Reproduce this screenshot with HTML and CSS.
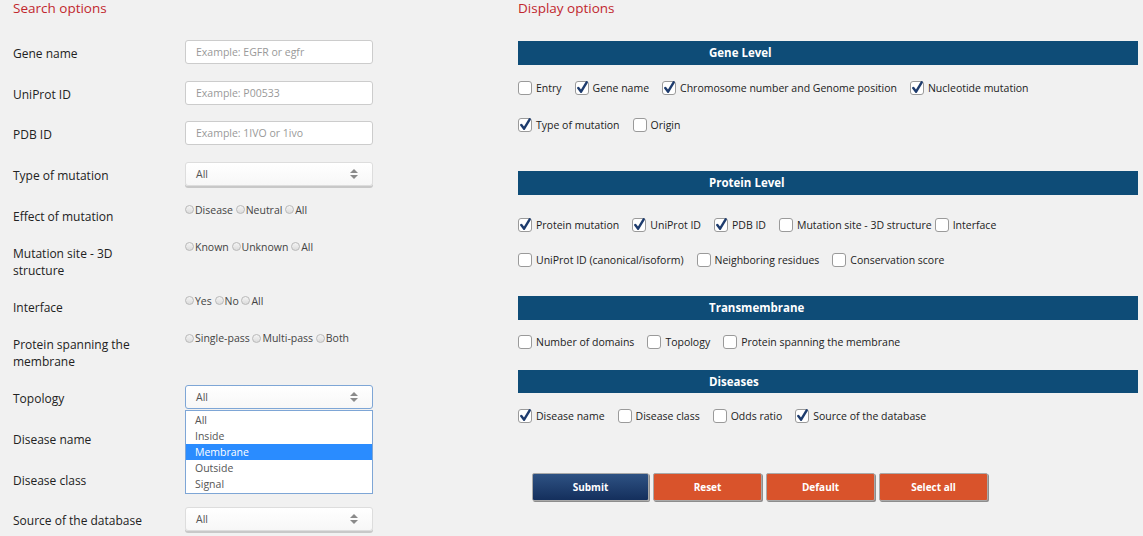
FILE: index.html
```html
<!DOCTYPE html>
<html lang="en">
<head>
  <meta charset="UTF-8" />
  <title>Search</title>
  <link rel="stylesheet" href="styles.css">
</head>
<body>

  <div class="page">

    <div class="search">
      <h2 class="title">Search options</h2>

      <div class="row">
        <div class="label">Gene name</div>
        <input class="field" type="text" placeholder="Example: EGFR or egfr">
      </div>
      <div class="row">
        <div class="label">UniProt ID</div>
        <input class="field" type="text" placeholder="Example: P00533">
      </div>
      <div class="row">
        <div class="label">PDB ID</div>
        <input class="field" type="text" placeholder="Example: 1IVO or 1ivo">
      </div>
      <div class="row">
        <div class="label">Type of mutation</div>
        <div class="select">All<svg class="arrows" viewBox="0 0 8 11"><path d="M4 0 L8 4 L0 4 Z M0 6 L8 6 L4 10 Z"/></svg></div>
      </div>
      <div class="row">
        <div class="label">Effect of mutation</div>
        <div class="radios">
          <span class="radio"></span>Disease
          <span class="radio"></span>Neutral
          <span class="radio"></span>All
        </div>
      </div>
      <div class="row">
        <div class="label">Mutation site - 3D<br>structure</div>
        <div class="radios">
          <span class="radio"></span>Known
          <span class="radio"></span>Unknown
          <span class="radio"></span>All
        </div>
      </div>
      <div class="row">
        <div class="label">Interface</div>
        <div class="radios">
          <span class="radio"></span>Yes
          <span class="radio"></span>No
          <span class="radio"></span>All
        </div>
      </div>
      <div class="row">
        <div class="label">Protein spanning the<br>membrane</div>
        <div class="radios">
          <span class="radio"></span>Single-pass
          <span class="radio"></span>Multi-pass
          <span class="radio"></span>Both
        </div>
      </div>
      <div class="row">
        <div class="label">Topology</div>
        <div class="dropdown">
          <div class="select focus">All<svg class="arrows" viewBox="0 0 8 11"><path d="M4 0 L8 4 L0 4 Z M0 6 L8 6 L4 10 Z"/></svg></div>
          <ul class="options">
            <li>All</li>
            <li>Inside</li>
            <li class="picked">Membrane</li>
            <li>Outside</li>
            <li>Signal</li>
          </ul>
        </div>
      </div>
      <div class="row">
        <div class="label">Disease name</div>
        <div class="select"></div>
      </div>
      <div class="row">
        <div class="label">Disease class</div>
        <div class="select"></div>
      </div>
      <div class="row">
        <div class="label">Source of the database</div>
        <div class="select">All<svg class="arrows" viewBox="0 0 8 11"><path d="M4 0 L8 4 L0 4 Z M0 6 L8 6 L4 10 Z"/></svg></div>
      </div>
    </div>

    <div class="display">
      <h2 class="title">Display options</h2>

      <div class="bar gene">Gene Level</div>
      <div class="checks first-gene">
        <label class="opt"><span class="cb"></span>Entry</label>
        <label class="opt"><span class="cb"><svg viewBox="0 0 14 14"><path d="M2.5 7.5 L5.5 11.5 L11.5 1.5"/></svg></span>Gene name</label>
        <label class="opt"><span class="cb"><svg viewBox="0 0 14 14"><path d="M2.5 7.5 L5.5 11.5 L11.5 1.5"/></svg></span>Chromosome number and Genome position</label>
        <label class="opt"><span class="cb"><svg viewBox="0 0 14 14"><path d="M2.5 7.5 L5.5 11.5 L11.5 1.5"/></svg></span>Nucleotide mutation</label>
      </div>
      <div class="checks second-gene">
        <label class="opt"><span class="cb"><svg viewBox="0 0 14 14"><path d="M2.5 7.5 L5.5 11.5 L11.5 1.5"/></svg></span>Type of mutation</label>
        <label class="opt"><span class="cb"></span>Origin</label>
      </div>

      <div class="bar protein">Protein Level</div>
      <div class="checks first-protein">
        <label class="opt"><span class="cb"><svg viewBox="0 0 14 14"><path d="M2.5 7.5 L5.5 11.5 L11.5 1.5"/></svg></span>Protein mutation</label>
        <label class="opt"><span class="cb"><svg viewBox="0 0 14 14"><path d="M2.5 7.5 L5.5 11.5 L11.5 1.5"/></svg></span>UniProt ID</label>
        <label class="opt"><span class="cb"><svg viewBox="0 0 14 14"><path d="M2.5 7.5 L5.5 11.5 L11.5 1.5"/></svg></span>PDB ID</label>
        <label class="opt tight"><span class="cb"></span>Mutation site - 3D structure</label>
        <label class="opt"><span class="cb"></span>Interface</label>
      </div>
      <div class="checks second-protein">
        <label class="opt"><span class="cb"></span>UniProt ID (canonical/isoform)</label>
        <label class="opt"><span class="cb"></span>Neighboring residues</label>
        <label class="opt"><span class="cb"></span>Conservation score</label>
      </div>

      <div class="bar trans">Transmembrane</div>
      <div class="checks first-trans">
        <label class="opt"><span class="cb"></span>Number of domains</label>
        <label class="opt"><span class="cb"></span>Topology</label>
        <label class="opt"><span class="cb"></span>Protein spanning the membrane</label>
      </div>

      <div class="bar diseases">Diseases</div>
      <div class="checks first-diseases">
        <label class="opt"><span class="cb"><svg viewBox="0 0 14 14"><path d="M2.5 7.5 L5.5 11.5 L11.5 1.5"/></svg></span>Disease name</label>
        <label class="opt"><span class="cb"></span>Disease class</label>
        <label class="opt"><span class="cb"></span>Odds ratio</label>
        <label class="opt"><span class="cb"><svg viewBox="0 0 14 14"><path d="M2.5 7.5 L5.5 11.5 L11.5 1.5"/></svg></span>Source of the database</label>
      </div>

      <div class="buttons">
        <button class="btn submit">Submit</button>
        <button class="btn orange">Reset</button>
        <button class="btn orange">Default</button>
        <button class="btn orange">Select all</button>
      </div>
    </div>

  </div>

</body>
</html>
```

FILE: styles.css
```css
body {
  font-family: 'Open Sans', sans-serif;
  background-color: #f1f1f1;
  margin: 0;
  padding: 0;
  color: #222;
}

.page {
  display: flex;
  height: 536px;
  overflow: hidden;
}

.title {
  margin: 0;
  font-size: 13.5px;
  font-weight: normal;
  line-height: 17px;
  color: #c1272d;
}

/* search column */

.search {
  width: 518px;
  flex: none;
  padding-left: 13px;
  box-sizing: border-box;
}

.search .title {
  margin-bottom: 23px;
}

.row {
  display: flex;
  align-items: flex-start;
  margin-bottom: 16.7px;
}

.label {
  width: 172px;
  flex: none;
  font-size: 12px;
  line-height: 17px;
  padding-top: 5px;
  margin-bottom: -1.6px;
}

.field {
  width: 188px;
  height: 24px;
  box-sizing: border-box;
  margin: 0;
  padding: 0 10px;
  font-family: 'Open Sans', sans-serif;
  font-size: 10.5px;
  color: #555;
  background: #fff;
  border: 1px solid #ccc;
  border-radius: 3px;
}

.field::placeholder {
  color: #999;
}

.select {
  position: relative;
  width: 188px;
  height: 24px;
  box-sizing: border-box;
  padding: 0 10px;
  font-size: 10.5px;
  line-height: 22px;
  color: #555;
  background: linear-gradient(#fff, #f7f7f7);
  border: 1px solid #ddd;
  border-radius: 3px;
  box-shadow: 0 2px 0 #c8c8c8;
}

.select.focus {
  border-color: #7ea6d6;
  box-shadow: none;
}

.arrows {
  position: absolute;
  right: 14px;
  top: 6px;
  width: 8px;
  height: 11px;
  fill: #8a8a8a;
}

.radios {
  font-size: 10.5px;
  line-height: 14px;
  color: #444;
}

.radio {
  display: inline-block;
  width: 7px;
  height: 7px;
  margin-right: 1px;
  vertical-align: -0.5px;
  border: 1px solid #b9b9b9;
  border-radius: 50%;
  background: linear-gradient(#f4f4f4, #dcdcdc);
}

.dropdown {
  position: relative;
}

.options {
  position: absolute;
  left: 0;
  top: 25px;
  z-index: 2;
  width: 188px;
  box-sizing: border-box;
  margin: 0;
  padding: 1px 0;
  list-style: none;
  background: #fff;
  border: 1px solid #7ea6d6;
  font-size: 10.5px;
  line-height: 16px;
  color: #555;
}

.options li {
  padding-left: 9px;
}

.options .picked {
  background: #2a8cff;
  color: #fff;
}

/* display column */

.display {
  width: 620px;
  flex: none;
}

.display .title {
  margin-bottom: 24px;
}

.bar {
  height: 24px;
  line-height: 24px;
  padding-left: 191px;
  background-color: #0e4c77;
  color: #fff;
  font-size: 11.5px;
  font-weight: bold;
}

.bar.diseases {
  height: 23px;
  line-height: 23px;
}

.checks {
  display: flex;
  align-items: center;
  height: 16px;
  font-size: 10.5px;
  color: #222;
}

.first-gene { margin-top: 15px; }
.second-gene { margin-top: 21px; }
.protein { margin-top: 38px; }
.first-protein { margin-top: 22px; }
.second-protein { margin-top: 19px; }
.trans { margin-top: 28px; }
.first-trans { margin-top: 14px; }
.diseases { margin-top: 20px; }
.first-diseases { margin-top: 15px; }

.opt {
  display: flex;
  align-items: center;
  margin-right: 13px;
  white-space: nowrap;
}

.opt.tight {
  margin-right: 3px;
}

.cb {
  position: relative;
  width: 12px;
  height: 12px;
  margin-right: 4px;
  border: 1px solid #9a9a9a;
  border-radius: 3px;
  background: #fff;
}

.cb svg {
  position: absolute;
  left: 0;
  top: -1px;
  width: 13px;
  height: 13px;
  fill: none;
  stroke: #1e3c6e;
  stroke-width: 2.6;
  stroke-linecap: round;
  stroke-linejoin: round;
}

.buttons {
  display: flex;
  gap: 4px;
  margin-top: 49px;
  margin-left: 14px;
}

.btn {
  width: 109px;
  height: 28px;
  padding: 0;
  font-family: 'Open Sans', sans-serif;
  font-size: 10px;
  font-weight: bold;
  color: #fff;
  border: 1px solid #a9a9a9;
  border-radius: 2px;
  box-shadow: 1px 1px 0 #8d8d8d;
  cursor: pointer;
}

.btn.submit {
  width: 117px;
  background: linear-gradient(#2e5283, #142f5c);
}

.btn.orange {
  background-color: #d9532b;
}
```
